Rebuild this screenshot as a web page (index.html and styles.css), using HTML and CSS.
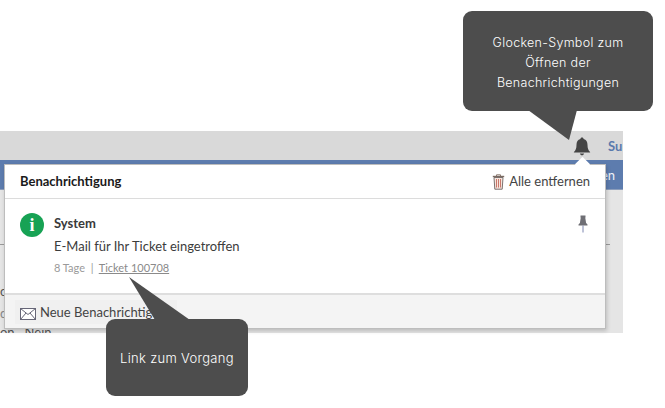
FILE: index.html
```html
<!DOCTYPE html>
<html lang="de">
<head>
<meta charset="utf-8">
<title>Benachrichtigung</title>
<link rel="stylesheet" href="styles.css">
</head>
<body>
<div class="page">
  <div class="app">
    <div class="topbar">
      <svg class="bell" viewBox="0 0 18 19"><path d="M9 0.500c1 0 1.600.7 1.600 1.600 2.700.7 3.900 3 3.900 5.600 0 3.600.8 5.500 2.600 7.300v.5H.9v-.5c1.800-1.800 2.600-3.700 2.600-7.300 0-2.600 1.200-4.900 3.900-5.600C7.400 1.200 8 .5 9 .5z" fill="#444"/><path d="M6.900 16.500h4.200c-.3 1-1.100 1.800-2.100 1.800s-1.800-.8-2.100-1.800z" fill="#444"/></svg>
      <span class="toplink">Su</span>
    </div>
    <div class="navbar"><span class="navlink">en</span></div>
    <div class="content">
      <div class="rule"></div>
      <div class="row-c">c</div>
      <div class="row-d">d</div>
      <div class="row-last">on&nbsp;&nbsp;&nbsp;Nein</div>
    </div>
  </div>

  <div class="panel">
    <div class="panel-head">
      <span class="panel-title">Benachrichtigung</span>
      <span class="remove-all">
        <svg class="trash" viewBox="0 0 13 16"><path d="M4.500 2V.8h4V2" fill="none" stroke="#8a7a70"/><path d="M.8 2.500h11.400" stroke="#7a6a62" stroke-width="1.400"/><path d="M2 3.500l.8 11.700h7.400L11 3.500z" fill="#f6e4dc" stroke="#7a7270"/><path d="M4.500 5v8.500M6.500 5v8.500M8.500 5v8.500" stroke="#c9776a" stroke-width="1"/></svg>
        Alle entfernen
      </span>
    </div>
    <div class="notice">
      <div class="info-icon">i</div>
      <div class="notice-body">
        <div class="notice-title">System</div>
        <div class="notice-text">E-Mail für Ihr Ticket eingetroffen</div>
        <div class="notice-meta">8 Tage &nbsp;|&nbsp; <a class="ticket" href="#">Ticket 100708</a></div>
      </div>
      <svg class="pin" viewBox="0 0 10 18"><path d="M2.500 .5h5v1.500L7.300 3l.8 5 1.400 1.500v1H.5v-1L1.900 8l.8-5-.2-1z" fill="#6f6f75"/><path d="M5 10.500V17.500" stroke="#7c86b0" stroke-width="1"/></svg>
    </div>
    <div class="panel-foot">
      <div class="new-btn">
        <svg class="mail" viewBox="0 0 16 12"><rect x=".5" y=".5" width="15" height="11" fill="#fff" stroke="#667"/><path d="M.5 .5l7.500 6 7.500-6M.5 11.500l5.500-6.500M15.500 11.500L10 5" fill="none" stroke="#667"/></svg>
        <span>Neue Benachrichtigung</span>
      </div>
    </div>
  </div>

  <div class="callout callout-bell">Glocken-Symbol zum<br>Öffnen der<br>Benachrichtigungen</div>
  <svg class="tail tail-bell" viewBox="0 0 50 32"><path d="M0 0L41 30 49 0z" fill="#4d4d4d"/></svg>

  <div class="callout callout-link">Link zum Vorgang</div>
  <svg class="tail tail-link" viewBox="0 0 62 44"><path d="M0 0L61 43H26z" fill="#4d4d4d"/></svg>
</div>
</body>
</html>
```
FILE: styles.css
```css
* { box-sizing: border-box; }
html, body { margin: 0; padding: 0; background: #fff; }
.page {
  position: relative;
  width: 665px;
  height: 408px;
  overflow: hidden;
  padding-top: 131px;
  font-family: "Lato", "Open Sans", sans-serif;
  color: #3c3c3c;
}
.app { width: 623px; height: 202px; display: flex; flex-direction: column; overflow: hidden; }
.topbar {
  height: 29px;
  background: #d9d9d9;
  display: flex;
  align-items: center;
  justify-content: flex-end;
  gap: 17px;
  flex: none;
  overflow: hidden;
}
.bell { width: 18px; height: 19px; flex: none; margin-top: 1px; }
.toplink { font-size: 13px; font-weight: 700; color: #5b7aad; width: 15px; white-space: nowrap; }
.navbar {
  height: 30px;
  background: #5d7cae;
  flex: none;
  display: flex;
  justify-content: flex-end;
  align-items: center;
  padding-right: 8px;
  border-bottom: 1px solid #8b9dbb;
}
.navlink { color: #eef2f8; font-size: 13px; margin-top: 1px; }
.content { flex: 1; background: #e5e5e5; position: relative; font-size: 13px; color: #555; }
.rule { position: absolute; left: 0; right: 13px; top: 54px; height: 1px; background: #9a9a9a; }
.row-c { position: absolute; left: 0; top: 93px; }
.row-d { position: absolute; left: 0; top: 115px; color: #888; }
.row-last { position: absolute; left: 0; top: 134px; white-space: nowrap; }

.panel {
  position: absolute;
  left: 4px;
  top: 164px;
  width: 602px;
  height: 165px;
  background: #fff;
  border: 1px solid #bdbdbd;
  box-shadow: 1px 2px 4px rgba(0, 0, 0, .18);
  display: flex;
  flex-direction: column;
}
.panel::before {
  content: "";
  position: absolute;
  right: 17px;
  top: -6px;
  width: 11px;
  height: 11px;
  background: #fff;
  transform: rotate(45deg);
  border-radius: 1px;
}
.panel-head {
  height: 34px;
  flex: none;
  border-bottom: 1px solid #dcdcdc;
  display: flex;
  align-items: center;
  justify-content: space-between;
  padding: 0 15px 2px;
  position: relative;
}
.panel-title { font-size: 13px; font-weight: 700; color: #1a1a1a; }
.remove-all { display: flex; align-items: center; gap: 4px; font-size: 13px; color: #444; }
.trash { width: 13px; height: 16px; margin-top: 2px; }
.notice { flex: 1; display: flex; padding: 14px 17px 0 15px; align-items: flex-start; }
.info-icon {
  width: 24px;
  height: 24px;
  border-radius: 50%;
  background: #17a254;
  color: #fff;
  font-family: "Liberation Serif", serif;
  font-weight: 700;
  font-size: 18px;
  line-height: 24px;
  text-align: center;
  flex: none;
}
.notice-body { flex: 1; padding-left: 10px; }
.notice-title { font-size: 13px; font-weight: 700; color: #3a3a3a; line-height: 18px; margin-top: 1px; }
.notice-text { font-size: 13px; line-height: 18px; margin-top: 5px; color: #3c3c3c; }
.notice-meta { font-size: 11px; line-height: 14px; margin-top: 6px; color: #9a9a9a; }
.ticket { color: #8a8a8a; text-decoration: underline; }
.pin { width: 10px; height: 18px; flex: none; margin-top: 2px; }
.panel-foot {
  height: 35px;
  flex: none;
  background: #f4f4f4;
  border-top: 2px solid #dedede;
  padding: 5px 10px;
  display: flex;
}
.new-btn {
  display: flex;
  align-items: center;
  gap: 4px;
  width: 162px;
  height: 24px;
  padding-left: 5px;
  background: #f0f0f0;
  font-size: 13px;
  color: #444;
  white-space: nowrap;
}
.mail { width: 16px; height: 12px; flex: none; margin-top: 3px; }

.callout {
  position: absolute;
  background: #4d4d4d;
  color: #fff;
  border-radius: 9px;
  font-family: "Inter", "Roboto", sans-serif;
  font-weight: 300;
  text-align: center;
  display: flex;
  align-items: center;
  justify-content: center;
}
.callout-bell { left: 463px; top: 11px; width: 190px; height: 100px; padding-top: 3px; line-height: 20px; font-size: 12.500px; letter-spacing: .3px; }
.callout-link { left: 106px; top: 319px; width: 142px; height: 77px; font-size: 13px; letter-spacing: .3px; }
.tail { position: absolute; display: block; }
.tail-bell { left: 528px; top: 110px; width: 50px; height: 32px; }
.tail-link { left: 129px; top: 277px; width: 62px; height: 44px; }
```
